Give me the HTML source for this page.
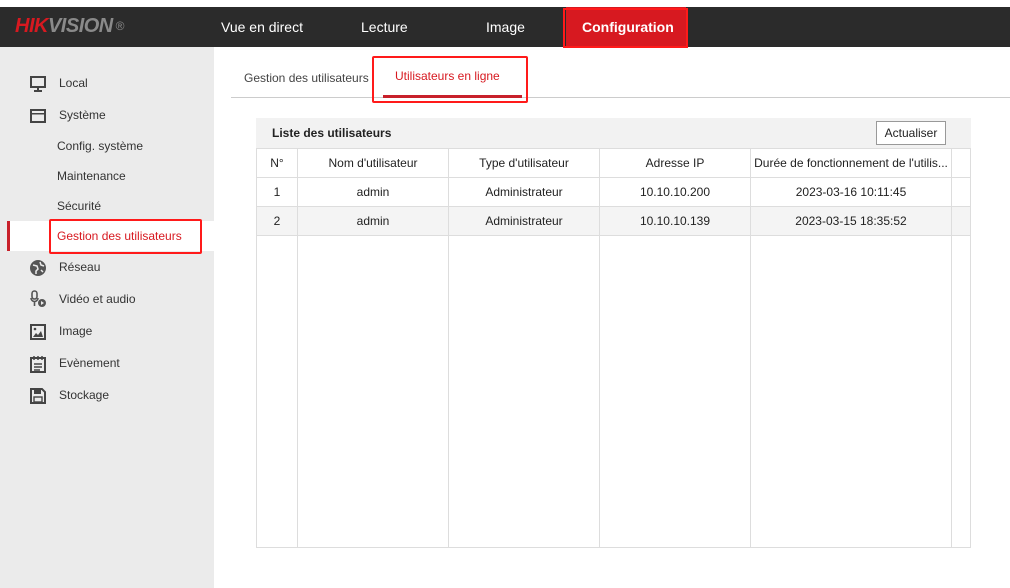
<!DOCTYPE html>
<html><head><meta charset="utf-8"><style>
*{margin:0;padding:0;box-sizing:border-box}
body{width:1010px;height:588px;background:#fff;font-family:"Liberation Sans",sans-serif;font-size:12px;color:#333;position:relative;overflow:hidden}
.a{position:absolute}
.top{left:0;top:7px;width:1010px;height:40px;background:#2b2b2b}
.nav{color:#fff;font-size:14px;top:19px}
.side{left:0;top:47px;width:214px;height:541px;background:#ebebeb}
.si{position:absolute;left:59px;font-size:12px;color:#333}
.sub{position:absolute;left:57px;font-size:12px;color:#333}
.ic{position:absolute;left:29px;width:18px;height:18px}
td{border:1px solid #ddd;text-align:center;height:29px;font-size:12px;color:#222}
table{border-collapse:collapse;position:absolute;left:256px;top:148px;width:715px}
</style></head><body>
<div class="a top"></div>
<div class="a" style="left:15px;top:15px;font-size:20px;font-style:italic;font-weight:bold;letter-spacing:-0.5px;line-height:22px"><span style="color:#d71920">HIK</span><span style="color:#8a8a8a">VISION</span><span style="color:#8a8a8a;font-size:12px;vertical-align:top;font-weight:normal;font-style:normal"> ®</span></div>
<div class="a nav" style="left:221px">Vue en direct</div>
<div class="a nav" style="left:361px">Lecture</div>
<div class="a nav" style="left:486px">Image</div>
<div class="a" style="left:566px;top:7px;width:120px;height:40px;background:#d71920"></div>
<div class="a" style="left:563px;top:8px;width:125px;height:40px;border:2px solid #ff1a1a"></div>
<div class="a nav" style="left:582px;font-weight:bold">Configuration</div>

<div class="a side"></div>
<svg class="ic" style="top:75px" viewBox="0 0 18 18"><rect x="2" y="2" width="14" height="10" fill="none" stroke="#444" stroke-width="2"/><rect x="8" y="12" width="2" height="3" fill="#444"/><rect x="5" y="15" width="8" height="2" fill="#444"/></svg>
<div class="si" style="top:76px">Local</div>
<svg class="ic" style="top:107px" viewBox="0 0 18 18"><rect x="2" y="3" width="14" height="12" fill="none" stroke="#444" stroke-width="2"/><rect x="2" y="6" width="14" height="1.5" fill="#444"/></svg>
<div class="si" style="top:108px">Système</div>
<div class="sub" style="top:139px">Config. système</div>
<div class="sub" style="top:169px">Maintenance</div>
<div class="sub" style="top:199px">Sécurité</div>
<div class="a" style="left:7px;top:221px;width:207px;height:30px;background:#fff"></div>
<div class="a" style="left:7px;top:221px;width:3px;height:30px;background:#c8202a"></div>
<div class="a" style="left:49px;top:219px;width:153px;height:35px;border:2px solid #ff1a1a;border-radius:2px"></div>
<div class="sub" style="top:229px;color:#d71920">Gestion des utilisateurs</div>
<svg class="ic" style="top:259px" viewBox="0 0 18 18"><circle cx="9" cy="9" r="8" fill="#555"/><path d="M4 6l4 1 1 3-2 2 0 3M11 3l1 3 3 1M12 11l2 2" stroke="#ebebeb" stroke-width="1.5" fill="none"/></svg>
<div class="si" style="top:260px">Réseau</div>
<svg class="ic" style="top:290px" viewBox="0 0 18 18"><rect x="3" y="1" width="5" height="8" rx="2.5" fill="none" stroke="#555" stroke-width="1.6"/><path d="M2 8a3.5 3.5 0 0 0 7 0M5.5 12v4" stroke="#555" stroke-width="1.6" fill="none"/><circle cx="13" cy="13" r="4" fill="#555"/><path d="M12 11v4l3-2z" fill="#ebebeb"/></svg>
<div class="si" style="top:292px">Vidéo et audio</div>
<svg class="ic" style="top:323px" viewBox="0 0 18 18"><rect x="2" y="2" width="14" height="14" fill="none" stroke="#444" stroke-width="2"/><path d="M4 14l3-4 2 2 3-4 2 6z" fill="#444"/><circle cx="6" cy="6" r="1.3" fill="#444"/></svg>
<div class="si" style="top:324px">Image</div>
<svg class="ic" style="top:355px" viewBox="0 0 18 18"><rect x="2" y="3" width="14" height="14" fill="none" stroke="#444" stroke-width="2"/><path d="M5 1v4M9 1v4M13 1v4M5 9h8M5 12h8M5 15h6" stroke="#444" stroke-width="1.5"/></svg>
<div class="si" style="top:356px">Evènement</div>
<svg class="ic" style="top:387px" viewBox="0 0 18 18"><path d="M2 2h11l3 3v11H2z" fill="none" stroke="#444" stroke-width="2"/><rect x="5" y="3" width="7" height="4" fill="#444"/><rect x="5" y="10" width="8" height="5" fill="none" stroke="#444" stroke-width="1.4"/></svg>
<div class="si" style="top:388px">Stockage</div>

<div class="a" style="left:244px;top:71px;font-size:12px;color:#444">Gestion des utilisateurs</div>
<div class="a" style="left:395px;top:69px;font-size:12px;color:#d71920">Utilisateurs en ligne</div>
<div class="a" style="left:231px;top:97px;width:779px;height:1px;background:#ccc"></div>
<div class="a" style="left:383px;top:95px;width:139px;height:3px;background:#c8202a"></div>
<div class="a" style="left:372px;top:56px;width:156px;height:47px;border:2px solid #ff1a1a;border-radius:2px"></div>

<div class="a" style="left:256px;top:118px;width:715px;height:30px;background:#f2f2f2"></div>
<div class="a" style="left:272px;top:126px;font-weight:bold;color:#222">Liste des utilisateurs</div>
<div class="a" style="left:876px;top:121px;width:70px;height:24px;border:1px solid #999;background:#fff;text-align:center;line-height:22px;color:#222">Actualiser</div>
<table>
<tr><td style="width:41px">N°</td><td style="width:151px">Nom d'utilisateur</td><td style="width:151px">Type d'utilisateur</td><td style="width:151px">Adresse IP</td><td style="width:201px;white-space:nowrap;overflow:hidden;max-width:201px">Durée de fonctionnement de l'utilis...</td><td></td></tr>
<tr><td>1</td><td>admin</td><td>Administrateur</td><td>10.10.10.200</td><td>2023-03-16 10:11:45</td><td></td></tr>
<tr style="background:#f4f4f4"><td>2</td><td>admin</td><td>Administrateur</td><td>10.10.10.139</td><td>2023-03-15 18:35:52</td><td></td></tr>
<tr><td style="height:312px"></td><td></td><td></td><td></td><td></td><td></td></tr>
</table>
</body></html>
